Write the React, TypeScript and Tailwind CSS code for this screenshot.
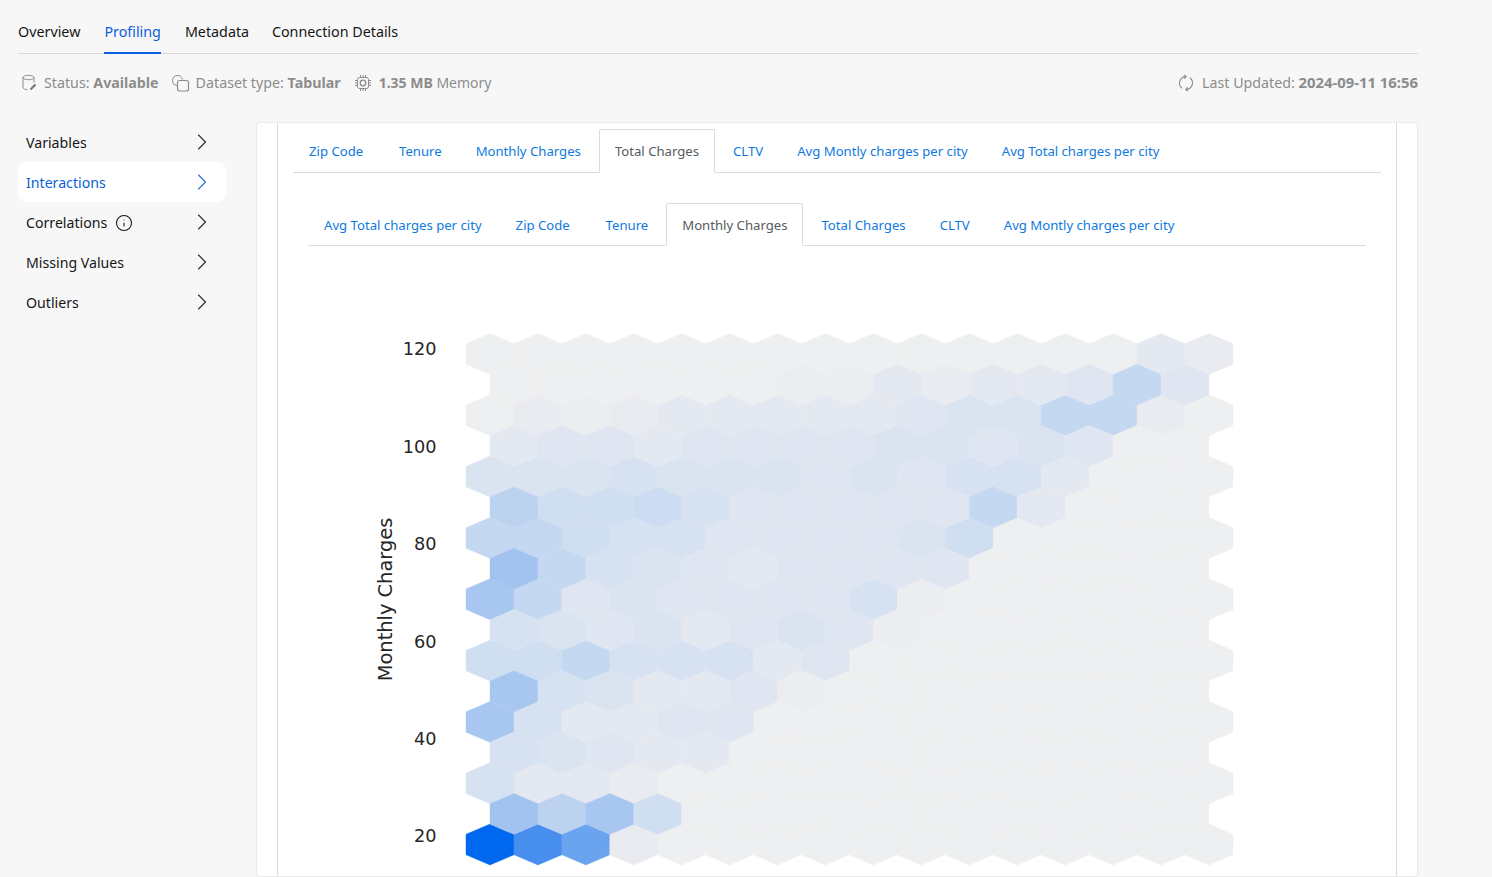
import { ChevronRight, Info } from 'lucide-react'

const PALETTE: Record<string, string> = {
  a: '#eeeff1',
  o: '#ecedf1',
  b: '#e9ebf0',
  c: '#e4e8f1',
  d: '#dfe6f1',
  e: '#dae4f1',
  f: '#d6e2f1',
  g: '#cfdef1',
  p: '#ccdcf2',
  h: '#c5d8f1',
  i: '#bcd2ef',
  j: '#a8c7f0',
  k: '#a2c3ef',
  l: '#6aa4ee',
  m: '#478eee',
  n: '#0068ee',
}

// one string per hexbin row, top to bottom
const HEX_ROWS = [
  'aaaaaaaaaaaaaacb',
  'aaaaaaoocbccdhd',
  'abobcccccdeehhba',
  'cddcddddeededaa',
  'eeefeeededffcaaa',
  'iggpfdddddhcaaa',
  'hhgffddddegaaaaa',
  'khfedcddddaaaaa',
  'jhdeddddfoaaaaaa',
  'fedecdedoaaaaaa',
  'gghfffcdaaaaaaaa',
  'jfeccdoaaaaaaaa',
  'jfccddaaaaaaaaaa',
  'fedccaaaaaaaaaa',
  'fccbaaaaaaaaaaaa',
  'kijgaaaaaaaaaaa',
  'nmlbaaaaaaaaaaaa',
]

const TICKS = [
  { label: '120', y: 348.5 },
  { label: '100', y: 446 },
  { label: '80', y: 543.5 },
  { label: '60', y: 641 },
  { label: '40', y: 738.5 },
  { label: '20', y: 835.5 },
]

const OUTER_TABS = ['Zip Code', 'Tenure', 'Monthly Charges', 'Total Charges', 'CLTV', 'Avg Montly charges per city', 'Avg Total charges per city']
const INNER_TABS = ['Avg Total charges per city', 'Zip Code', 'Tenure', 'Monthly Charges', 'Total Charges', 'CLTV', 'Avg Montly charges per city']
const NAV = ['Overview', 'Profiling', 'Metadata', 'Connection Details']
const SIDE = ['Variables', 'Interactions', 'Correlations', 'Missing Values', 'Outliers']

function hexPoints(cx: number, cy: number) {
  const hw = 24
  const s = 20.45
  return [
    [cx, cy - s],
    [cx + hw, cy - s / 2],
    [cx + hw, cy + s / 2],
    [cx, cy + s],
    [cx - hw, cy + s / 2],
    [cx - hw, cy - s / 2],
  ]
    .map((p) => p.join(','))
    .join(' ')
}

function HexChart() {
  const cells: { x: number; y: number; fill: string; odd: boolean }[] = []
  HEX_ROWS.forEach((row, r) => {
    const odd = r % 2 === 1
    row.split('').forEach((ch, c) => {
      cells.push({ x: (odd ? 514 : 490) + 47.93 * c, y: 354 + 30.66 * r, fill: PALETTE[ch], odd })
    })
  })
  const ordered = [...cells.filter((c) => !c.odd), ...cells.filter((c) => c.odd)]

  return (
    <svg width="1118" height="631" viewBox="278 246 1118 631" className="block">
      {ordered.map((c, i) => (
        <polygon key={i} points={hexPoints(c.x, c.y)} fill={c.fill} stroke={c.fill} strokeWidth="0.4" />
      ))}
      {TICKS.map((t) => (
        <text key={t.label} x="436.5" y={t.y + 6.5} textAnchor="end" fill="#262626" fontSize="17.7" fontFamily="'DejaVu Sans', sans-serif">
          {t.label}
        </text>
      ))}
      <text
        transform="translate(392 599.5) rotate(-90)"
        textAnchor="middle"
        fill="#262626"
        fontSize="19.4"
        fontFamily="'DejaVu Sans', sans-serif"
      >
        Monthly Charges
      </text>
    </svg>
  )
}

function StatusIcon() {
  return (
    <svg width="18" height="18" viewBox="0.5 0 18 18" fill="none" stroke="#8c8c8c" strokeWidth="1" className="shrink-0">
      <ellipse cx="8" cy="3.5" rx="5.5" ry="2.2" />
      <path d="M2.5 3.5v10c0 1.2 2 2.2 4.5 2.2M13.5 3.5v5" />
      <path d="M10 15.5l5-5" strokeWidth="2.2" stroke="#777777" />
    </svg>
  )
}

function DatasetIcon() {
  return (
    <svg width="18" height="18" viewBox="1 0 18 18" fill="none" stroke="#8c8c8c" strokeWidth="1" className="shrink-0">
      <path d="M6 11.5a5 5 0 1 1 5.5-6" />
      <rect x="6.5" y="6.5" width="11" height="10.5" rx="2" strokeWidth="1.2" />
    </svg>
  )
}

function ChipIcon() {
  return (
    <svg width="18" height="18" viewBox="1 0 18 18" fill="none" stroke="#8c8c8c" strokeWidth="1" className="shrink-0">
      <rect x="3.5" y="3.5" width="11" height="11" rx="2" />
      <circle cx="9" cy="9" r="2.8" strokeWidth="1.3" />
      <path d="M6.5 1v2.5M9 1v2.5M11.5 1v2.5M6.5 14.5V17M9 14.5V17M11.5 14.5V17M1 6.5h2.5M1 9h2.5M1 11.5h2.5M14.5 6.5H17M14.5 9H17M14.5 11.5H17" />
    </svg>
  )
}

function RefreshIcon() {
  return (
    <svg width="18" height="18" viewBox="0 0 18 18" fill="none" stroke="#8c8c8c" strokeWidth="1.1" className="shrink-0">
      <path d="M9 2.6A6.5 6.5 0 0 0 5 14.2" />
      <path d="M9 15.4A6.5 6.5 0 0 0 13 3.8" />
      <path d="M7.2 0.8L9.2 2.6L7.2 4.6M10.8 13.4L8.8 15.4L10.8 17.2" />
    </svg>
  )
}

interface TabRowProps {
  tabs: string[]
  active: string
  height: string
  linkText: string
  activeText: string
}

function TabRow({ tabs, active, height, linkText, activeText }: TabRowProps) {
  return (
    <div className={`flex gap-[2px] border-b border-[#dcdcdc] text-[13.15px] ${height}`}>
      {tabs.map((tab) =>
        tab === active ? (
          <div key={tab} className={`flex items-center px-[15px] -mb-px rounded-t-[2px] border border-[#dcdcdc] border-b-white bg-white text-[#555b61] ${activeText}`}>
            {tab}
          </div>
        ) : (
          <div key={tab} className={`flex items-center px-4 text-[#0f7ae0] ${linkText} ${tab === 'Zip Code' ? 'w-[88px]' : ''}`}>
            {tab}
          </div>
        ),
      )}
    </div>
  )
}

export default function App() {
  return (
    <div className="h-[877px] w-[1492px] overflow-hidden bg-[#f7f7f7] font-['Noto_Sans',sans-serif] text-[14.15px] text-[#161616]">
      <div className="w-[1418px] pl-[18px]">
        <nav className="flex h-[54px] gap-6 border-b border-[#d9d9d9] pt-[10px] text-[14.3px]">
          {NAV.map((item) =>
            item === 'Profiling' ? (
              <div key={item} className="-mb-px flex h-[44px] items-center border-y-2 border-t-transparent border-b-[#0a5fdb] text-[#0a5fdb]">
                {item}
              </div>
            ) : (
              <div key={item} className={`-mb-px flex h-[44px] items-center border-y-2 border-transparent ${item === 'Metadata' ? 'w-[63px]' : ''}`}>
                {item}
              </div>
            ),
          )}
        </nav>

        <div className="flex h-[58px] items-center justify-between pl-[3px] pb-[1px] text-[14.25px] text-[#8c8c8c]">
          <div className="flex items-center">
            <StatusIcon />
            <span className="ml-[5px]">
              Status: <b className="font-bold">Available</b>
            </span>
            <span className="ml-[13px]"><DatasetIcon /></span>
            <span className="ml-[6px]">
              Dataset type: <b className="font-bold">Tabular</b>
            </span>
            <span className="ml-[14px]"><ChipIcon /></span>
            <span className="ml-[6px] text-[14px]">
              <b className="font-bold">1.35 MB</b> Memory
            </span>
          </div>
          <div className="flex items-center gap-[7px]">
            <RefreshIcon />
            <span>
              Last Updated: <b className="text-[14.85px] font-bold">2024-09-11 16:56</b>
            </span>
          </div>
        </div>

        <div className="flex items-start pt-[10px]">
          <aside className="w-[208px] shrink-0">
            {SIDE.map((item) => {
              const active = item === 'Interactions'
              return (
                <div
                  key={item}
                  className={`flex h-10 items-center justify-between rounded-lg pl-2 pr-[10px] ${active ? 'bg-white text-[#0a5fdb]' : ''}`}
                >
                  <span className="flex items-center gap-2 pt-[2px]">
                    {item}
                    {item === 'Correlations' && <Info size={18} strokeWidth={1.4} />}
                  </span>
                  <ChevronRight size={28} strokeWidth={1} className={active ? 'text-[#2f72d8]' : 'text-[#333333]'} />
                </div>
              )
            })}
          </aside>

          <main className="ml-[30px] h-[755px] w-[1162px] rounded-sm border border-[#ebebeb] bg-white px-5 shadow-xs">
            <div className="h-full overflow-hidden border-x border-[#dcdcdc]">
              <div className="px-[15px] pt-[6px]">
                <TabRow tabs={OUTER_TABS} active="Total Charges" height="h-[44px]" linkText="pt-[2px]" activeText="pt-[2px]" />
              </div>
              <div className="px-[30px] pt-[30px]">
                <TabRow tabs={INNER_TABS} active="Monthly Charges" height="h-[43px]" linkText="pt-[4px]" activeText="pt-[2px]" />
              </div>
              <HexChart />
            </div>
          </main>
        </div>
      </div>
    </div>
  )
}
